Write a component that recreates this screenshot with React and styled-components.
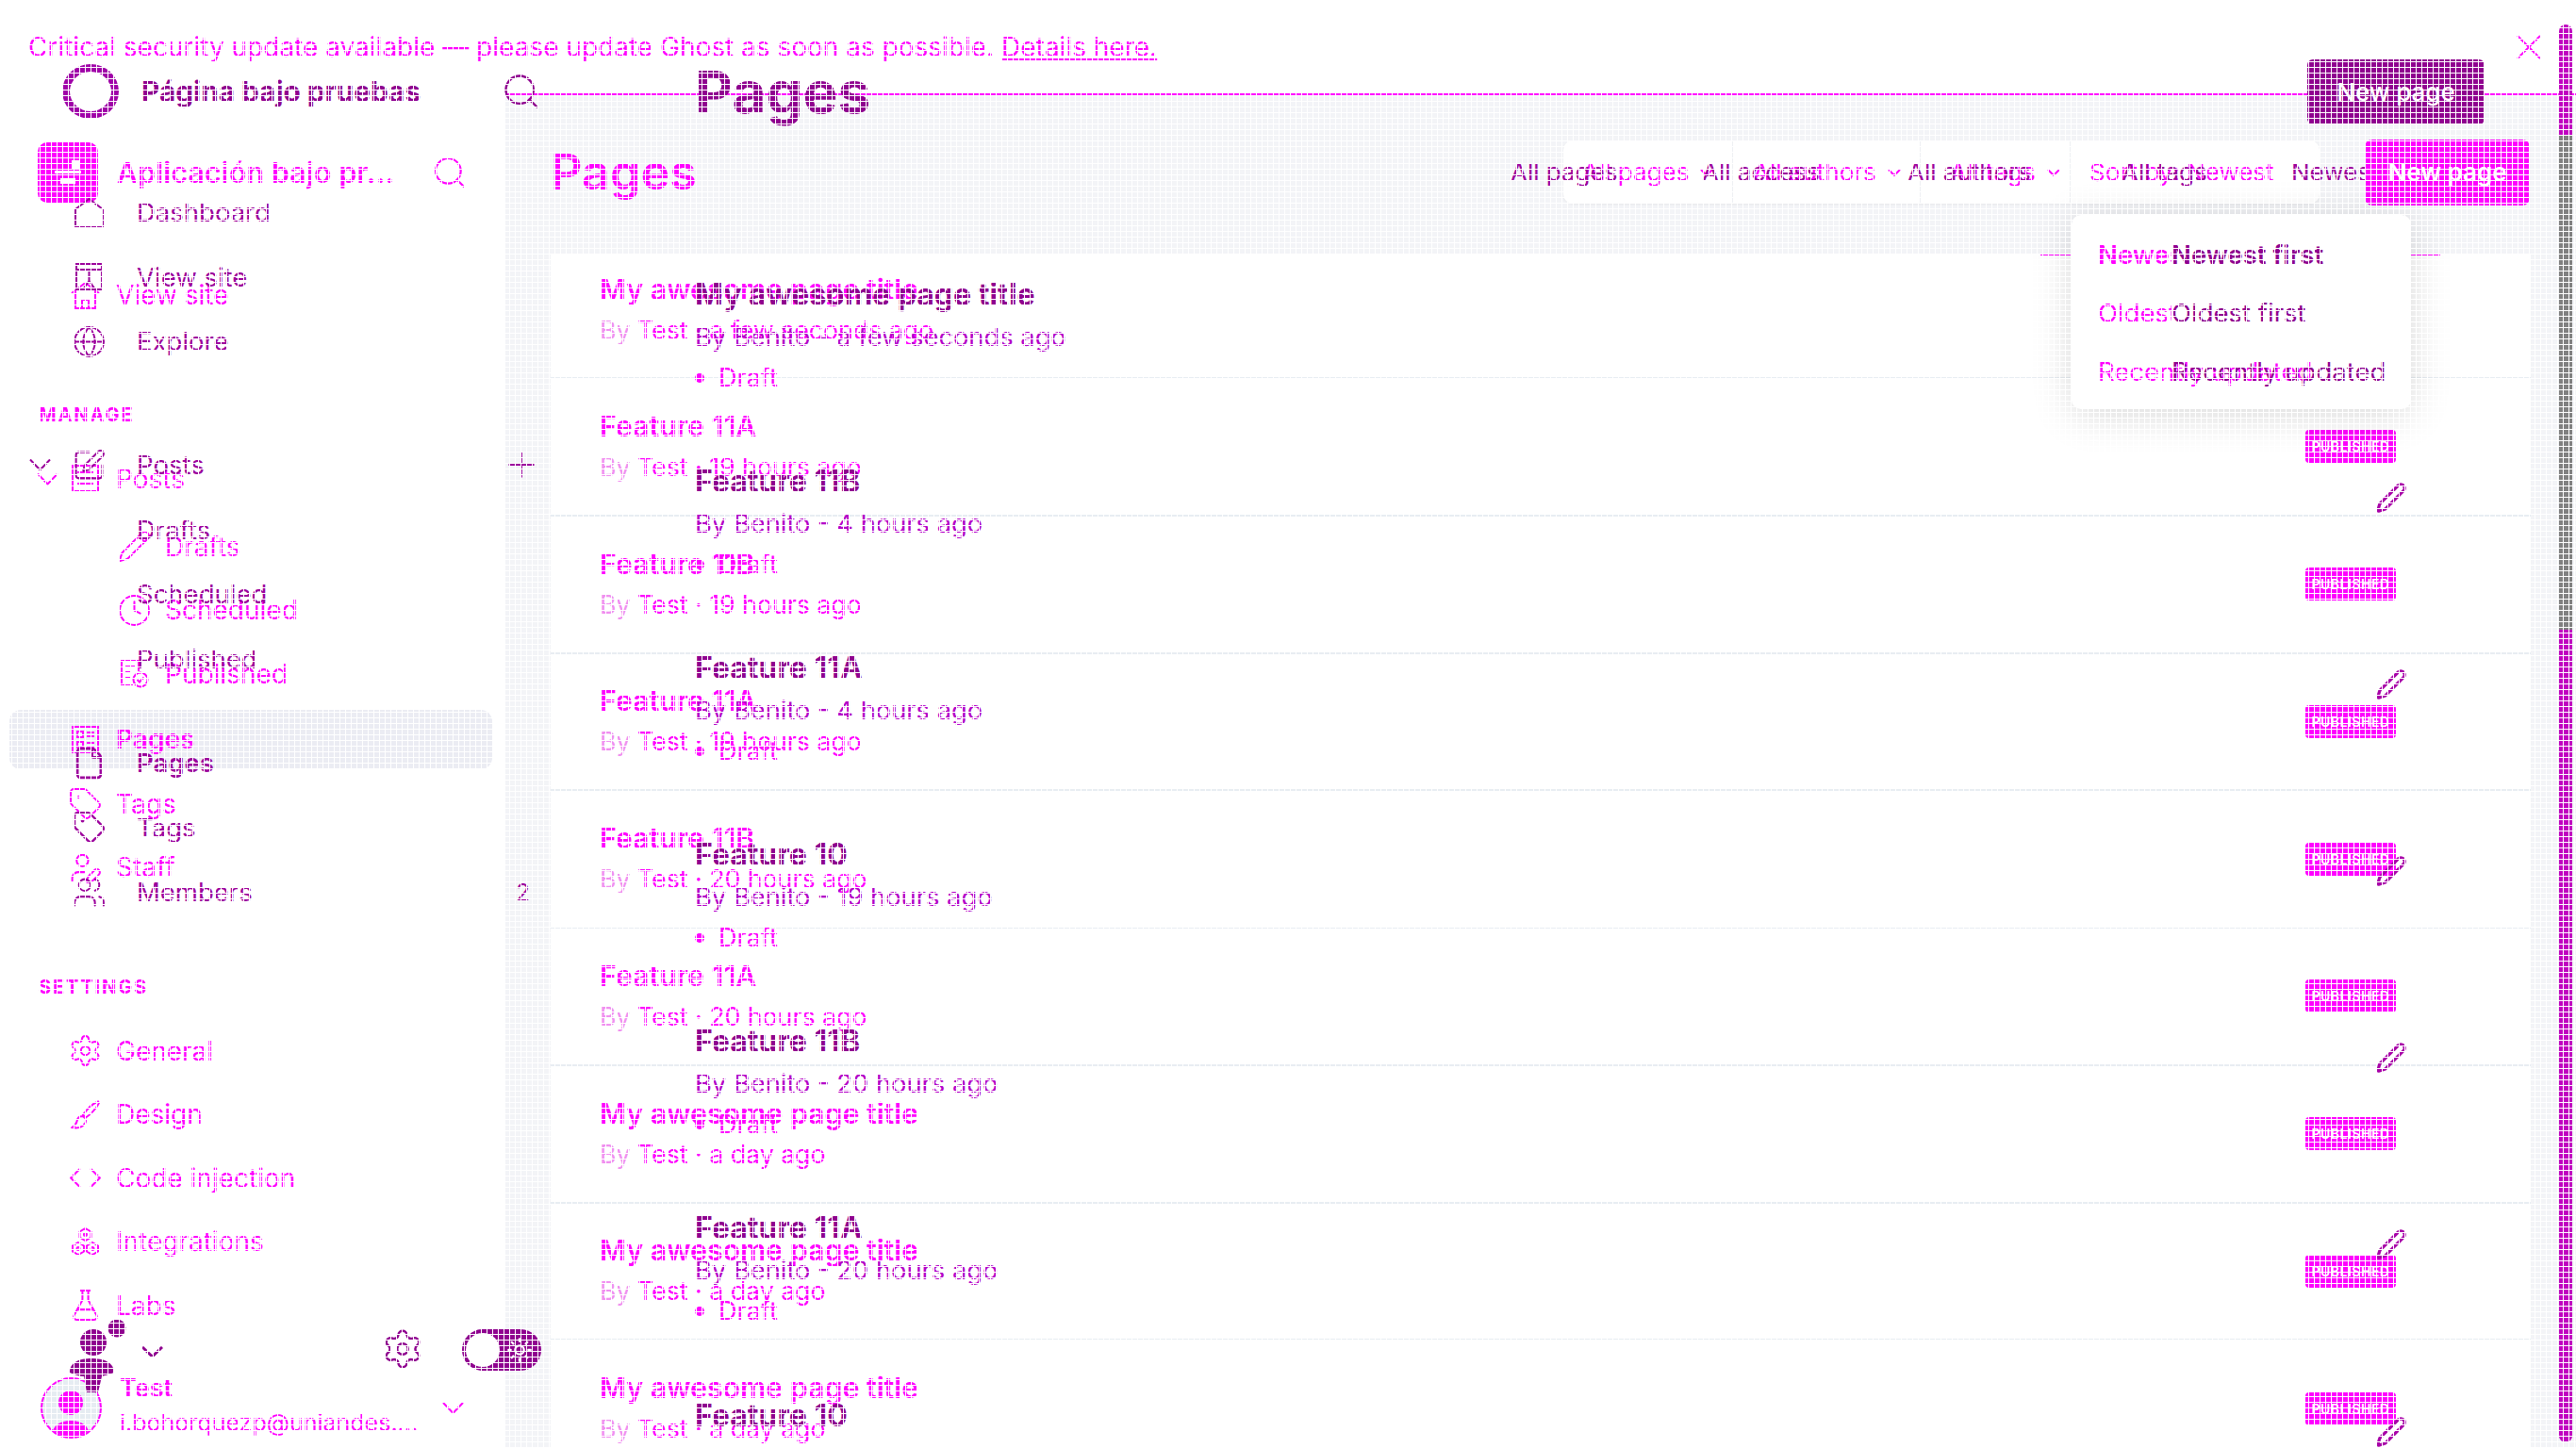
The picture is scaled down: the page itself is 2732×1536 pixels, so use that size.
import React from 'react';
import styled, { createGlobalStyle } from 'styled-components';
import {
  Clock, Code, File, FlaskConical, Globe, Pen, Pencil, Plus, Search, Settings,
  SquarePen, Sun, Tag, UserPen, Users,
} from 'lucide-react';

const MAGENTA = '#ff00ff';
const PURPLE = '#8f008f';

const GlobalStyle = createGlobalStyle`
  html, body {
    margin: 0;
    width: 2732px;
    height: 1536px;
    overflow: hidden;
    background: #fff;
  }
  * { box-sizing: border-box; }
`;

const Screen = styled.div`
  position: relative;
  width: 2732px;
  height: 1536px;
  overflow: hidden;
  background: #fff;
  font-family: Inter, "Liberation Sans", sans-serif;
`;

// the two captures lie over each other, so each one is its own layer
const CurrentLayer = styled.div`
  position: absolute;
  inset: 0;
  display: flex;
  flex-direction: column;
  color: ${MAGENTA};
`;

const BaseLayer = styled.div`
  position: absolute;
  inset: 0;
  display: flex;
  color: ${PURPLE};
`;

const Banner = styled.div`
  height: 99px;
  flex: none;
  display: flex;
  align-items: center;
  justify-content: space-between;
  padding: 0 37px 0 30px;
  font-size: 28px;
  a { color: inherit; text-decoration: underline; }
`;

const CurrentBody = styled.div`
  flex: 1;
  display: flex;
  min-height: 0;
`;

const CurrentSide = styled.div`
  width: 536px;
  flex: none;
  display: flex;
  flex-direction: column;
`;

const AppHead = styled.div`
  height: 66px;
  margin-top: 51px;
  display: flex;
  align-items: center;
  padding: 0 39px 0 40px;
`;

const AppIcon = styled.div`
  width: 64px;
  height: 64px;
  flex: none;
  border-radius: 10px;
  background: ${MAGENTA};
  display: flex;
  align-items: center;
  justify-content: center;
`;

const AppName = styled.div`
  flex: 1;
  margin-left: 20px;
  font-size: 30px;
  font-weight: 600;
  letter-spacing: 0.3px;
  white-space: nowrap;
`;

const SectionLabel = styled.div`
  height: 24px;
  margin: 81px 0 22.25px 41px;
  font-size: 20px;
  line-height: 24px;
  font-weight: 700;
  letter-spacing: 1.9px;
`;

const NavRow = styled.div`
  height: 67.5px;
  display: flex;
  align-items: center;
  gap: 17px;
  padding-left: ${p => (p.$sub ? 127 : 75)}px;
  margin-top: ${p => p.$top || 0}px;
  font-size: 28px;
  position: relative;
  > svg.lucide { width: 37px; height: 37px; margin: -3px; flex: none; }
  > svg { flex: none; }
`;

const ActiveRow = styled(NavRow)`
  width: 512px;
  height: 63px;
  margin: 4.25px 0 3px 10px;
  padding-left: 65px;
  border-radius: 12px;
  background: #ebecf3;
  font-weight: 600;
`;

const RowChevron = styled.span`
  position: absolute;
  left: ${p => p.$left}px;
  top: 50%;
  transform: translateY(-50%);
  display: flex;
`;

const UserRow = styled.div`
  margin-top: 41px;
  padding: 0 44px 0 43px;
  display: flex;
  align-items: center;
  gap: 19px;
`;

const Avatar = styled.div`
  width: 65px;
  height: 65px;
  flex: none;
  border-radius: 50%;
  border: 2px solid ${MAGENTA};
  background: #e6ecf2;
  overflow: hidden;
`;

const UserText = styled.div`
  flex: 1;
  margin-top: -6px;
  font-size: 25px;
  line-height: 37px;
  white-space: nowrap;
  strong { display: block; font-size: 27px; font-weight: 600; }
`;

const CurrentMain = styled.div`
  flex: 1;
  display: flex;
  flex-direction: column;
  min-width: 0;
  padding-left: 48px;
  background: #f3f4f7;
  border-top: 2px solid ${MAGENTA};
`;

const CurrentHead = styled.div`
  height: 168px;
  flex: none;
  display: flex;
  align-items: center;
  padding: 0 49px 5px 0;
`;

const CurrentTitle = styled.div`
  flex: 1;
  font-size: 52px;
  font-weight: 600;
`;

const FilterBox = styled.div`
  height: 67px;
  display: flex;
  margin-right: 48px;
  border-radius: 10px;
  background: #fff;
  box-shadow: 0 1px 3px rgba(0, 0, 0, 0.05);
`;

const FilterCell = styled.div`
  width: ${p => p.$w}px;
  display: flex;
  align-items: center;
  gap: 12px;
  padding-left: ${p => p.$pad}px;
  font-size: 26px;
  white-space: nowrap;
  & + & { border-left: 1px solid #eef0f3; }
`;

const NewButton = styled.div`
  width: 175px;
  height: 70px;
  display: flex;
  align-items: center;
  justify-content: center;
  border-radius: 8px;
  background: ${MAGENTA};
  color: #fff;
  font-size: 26px;
  font-weight: 600;
`;

const Card = styled.div`
  flex: 1;
  position: relative;
  margin-right: 48px;
  background: #fff;
  border-top: 1px solid #e6e9ee;
`;

const CardEdge = styled.div`
  position: absolute;
  left: 1580px;
  top: -1px;
  width: 424px;
  height: 2px;
  background: ${MAGENTA};
`;

const RowText = styled.div`
  margin-top: -4px;
`;

const CurrentRow = styled.div`
  height: 145.75px;
  display: flex;
  align-items: center;
  justify-content: space-between;
  padding: 0 143px 0 52px;
  border-bottom: 2px solid #e8edf2;
  &:first-child {
    height: 132px;
    ${RowText} { margin-top: -16px; }
  }
`;

const RowTitle = styled.div`
  font-size: 30.300px;
  line-height: 36px;
  font-weight: 600;
  white-space: nowrap;
`;

const RowMeta = styled.div`
  margin-top: 10px;
  font-size: 26.700px;
  line-height: 30px;
  white-space: nowrap;
  span { color: #f090f0; }
`;

const Badge = styled.div`
  width: 96px;
  height: 35px;
  display: flex;
  align-items: center;
  justify-content: center;
  border-radius: 4px;
  background: ${MAGENTA};
  color: #fff;
  font-size: 14px;
  font-weight: 600;
  letter-spacing: 0.5px;
`;

const BaseSide = styled.div`
  width: 600px;
  height: 1536px;
  flex: none;
  display: flex;
  flex-direction: column;
  padding-top: 68px;
`;

const SiteHead = styled.div`
  height: 58px;
  flex: none;
  display: flex;
  align-items: center;
  padding: 0 25px 0 66px;
`;

const LogoRing = styled.div`
  width: 60px;
  height: 58px;
  flex: none;
  border-radius: 50%;
  border: 8px solid #a000a8;
`;

const SiteName = styled.div`
  flex: 1;
  margin-left: 24px;
  font-size: 29.800px;
  font-weight: 700;
  white-space: nowrap;
`;

const BaseRow = styled.div`
  height: 68.5px;
  flex: none;
  display: flex;
  align-items: center;
  gap: 35px;
  margin-top: ${p => p.$top || 0}px;
  padding: 0 25px 0 ${p => (p.$sub ? 145 : 79)}px;
  font-size: 27.500px;
  font-weight: ${p => (p.$active ? 600 : 400)};
  position: relative;
  color: #9c009c;
  > svg.lucide { width: 37px; height: 37px; margin: -3px; flex: none; }
  > svg { flex: none; }
`;

const RowEnd = styled.span`
  margin-left: auto;
  display: flex;
  font-size: 24px;
`;

const RowCount = styled(RowEnd)`
  margin-right: 13px;
`;

const BaseFooter = styled.div`
  margin-top: auto;
  height: 77px;
  flex: none;
  margin-bottom: 59px;
  padding-left: 74px;
  display: flex;
  align-items: flex-start;
`;

const FooterChevron = styled.span`
  display: flex;
  margin: 28px 0 0 16px;
`;

const FooterGear = styled.span`
  display: flex;
  margin: 8px 0 0 231px;
`;

const Toggle = styled.div`
  position: relative;
  width: 84px;
  height: 44px;
  margin: 10px 0 0 40px;
  border-radius: 22px;
  background: ${PURPLE};
  display: flex;
  align-items: center;
  justify-content: flex-end;
  padding-right: 9px;
`;

const ToggleKnob = styled.span`
  position: absolute;
  left: 4px;
  top: 4px;
  width: 36px;
  height: 36px;
  border-radius: 50%;
  background: #fff;
`;

const BaseMain = styled.div`
  flex: 1;
  min-width: 0;
  margin-left: 137px;
  padding: 63px 97px 0 0;
  display: flex;
  flex-direction: column;
`;

const BaseHead = styled.div`
  height: 69px;
  flex: none;
  display: flex;
  align-items: center;
  justify-content: space-between;
`;

const BaseTitle = styled.div`
  font-size: 62px;
  font-weight: 700;
`;

const BaseButton = styled.div`
  width: 188px;
  height: 69px;
  display: flex;
  align-items: center;
  justify-content: center;
  border-radius: 6px;
  background: ${PURPLE};
  color: #fff;
  font-size: 26px;
  font-weight: 500;
`;

const BaseFilters = styled.div`
  height: 40px;
  flex: none;
  margin: 31px 127px 90px 0;
  display: flex;
  justify-content: flex-end;
  font-size: 26px;
  line-height: 40px;
  white-space: nowrap;
  color: #9c009c;
`;

const BaseFilter = styled.div`
  width: ${p => p.$w}px;
  overflow: hidden;
`;

const BaseItem = styled.div`
  height: 198.100px;
  flex: none;
  display: flex;
  align-items: flex-start;
  justify-content: space-between;
  padding-right: 82px;
`;

const BaseItemTitle = styled.div`
  font-size: 32px;
  line-height: 40px;
  font-weight: 700;
  white-space: nowrap;
`;

const BaseItemMeta = styled.div`
  margin-top: 10px;
  font-size: 27.300px;
  line-height: 30px;
  white-space: nowrap;
  color: #b400c8;
`;

const DraftTag = styled.div`
  margin-top: 13px;
  display: flex;
  align-items: center;
  gap: 15px;
  font-size: 27px;
  line-height: 30px;
  color: ${MAGENTA};
  &::before {
    content: '';
    width: 10px;
    height: 10px;
    border-radius: 50%;
    background: ${MAGENTA};
  }
`;

const EditIcon = styled.span`
  display: flex;
  margin-top: 20px;
  color: #a800a8;
`;

const Dropdown = styled.div`
  position: absolute;
  left: 2197px;
  top: 228px;
  width: 360px;
  height: 206px;
  padding-top: 11px;
  border-radius: 10px;
  background: #fff;
  box-shadow: 0 6px 44px rgba(0, 0, 0, 0.16);
`;

const DropItem = styled.div`
  height: 62px;
  display: grid;
  align-items: center;
  padding-left: 28px;
  font-size: 27.500px;
  white-space: nowrap;
  font-weight: ${p => (p.$bold ? 600 : 400)};
  > * { grid-area: 1 / 1; }
`;

const DropCurrent = styled.span`
  color: ${MAGENTA};
  overflow: hidden;
  ${p => p.$clip && 'width: 78px;'}
`;

const DropBase = styled.span`
  margin-left: 78px;
  color: ${PURPLE};
`;

const Scrollbar = styled.div`
  position: absolute;
  left: 2714px;
  top: 26px;
  width: 14px;
  height: 1504px;
  border-radius: 7px;
  overflow: hidden;
  display: flex;
  flex-direction: column;
`;

const ScrollPart = styled.div`
  height: ${p => p.$h}px;
  background: ${p => p.$color};
`;

// fine white mesh that runs across the whole capture
const Mesh = styled.div`
  position: absolute;
  inset: 0;
  pointer-events: none;
  background-image:
    repeating-linear-gradient(90deg, #fff 0 1px, transparent 1px 6px),
    repeating-linear-gradient(0deg, #fff 0 1px, transparent 1px 6px);
  background-position: 0 0;
`;

const Chevron = ({ w = 23, h = 13, sw = 2 }) => (
  <svg width={w} height={h} viewBox={`0 0 ${w} ${h}`} fill="none" stroke="currentColor" strokeWidth={sw}>
    <path d={`M1 1 ${w / 2} ${h - 1} ${w - 1} 1`} />
  </svg>
);

const CloseIcon = () => (
  <svg width="26" height="26" viewBox="0 0 26 26" fill="none" stroke="currentColor" strokeWidth="2">
    <path d="m1 1 24 24M25 1 1 25" />
  </svg>
);

const HomeIcon = () => (
  <svg width="31" height="31" viewBox="0 0 31 31" fill="none" stroke="currentColor" strokeWidth="2">
    <path d="M1 30V12L15.500 1 30 12v18z" />
  </svg>
);

const HouseIcon = () => (
  <svg width="31" height="31" viewBox="0 0 31 31" fill="none" stroke="currentColor" strokeWidth="2">
    <path d="M1 13 15.500 2 30 13M5 11v18h21V11M12 29v-9h7v9" />
  </svg>
);

const WindowIcon = () => (
  <svg width="31" height="31" viewBox="0 0 31 31" fill="none" stroke="currentColor" strokeWidth="2">
    <path d="M2 2h27v27H2zM2 8h27M15.500 8v12M9 29l6.500-9 6.500 9" />
  </svg>
);

const ListDocIcon = () => (
  <svg width="31" height="31" viewBox="0 0 31 31" fill="none" stroke="currentColor" strokeWidth="2">
    <path d="M2 2h27v27H2zM7 9h17M7 15h17M7 21h17" />
  </svg>
);

const PagesIcon = () => (
  <svg width="31" height="31" viewBox="0 0 31 31" fill="none" stroke="currentColor" strokeWidth="2">
    <path d="M2 2h27v27H2zM7 7h6v6H7zM7 18h6v6H7zM17 8h8M17 12h8M17 19h8M17 23h8" />
  </svg>
);

const PublishedIcon = () => (
  <svg width="31" height="31" viewBox="0 0 31 31" fill="none" stroke="currentColor" strokeWidth="2">
    <path d="M14 27H2V2h18v11M6 8h10M6 14h6M6 20h5" />
    <circle cx="22" cy="22" r="7.500" />
    <path d="m18.500 22 2.500 2.500 4.500-5" />
  </svg>
);

const BrushIcon = () => (
  <svg width="31" height="31" viewBox="0 0 31 31" fill="none" stroke="currentColor" strokeWidth="2">
    <path d="M29 1.500c-5 2-12 8.500-16 14l3 3c5-3.500 12-10.500 14-15.500zM12.500 17c-4 0-5.500 2.500-6 5.500-.5 2.500-2 4.500-5 6.500 5 1 11 0 14-5 1-2 .5-5-3-7z" />
  </svg>
);

const IntegrationsIcon = () => (
  <svg width="31" height="31" viewBox="0 0 31 31" fill="none" stroke="currentColor" strokeWidth="2">
    <path d="m15.500 1 6 3.500v6l-6 3.500-6-3.500v-6zM8 16l6 3.500v6L8 29l-6-3.500v-6zM23 16l6 3.500v6L23 29l-6-3.500v-6z" />
    <circle cx="15.500" cy="7.500" r="1.500" />
    <circle cx="8" cy="22.500" r="1.500" />
    <circle cx="23" cy="22.500" r="1.500" />
  </svg>
);

const PeopleIcon = () => (
  <svg width="60" height="77" viewBox="0 0 60 77" fill={PURPLE}>
    <circle cx="25" cy="24" r="14" />
    <circle cx="50" cy="9" r="9.500" />
    <path d="M0 56c0-11 10-15 23-15s24 4 24 15c-5 2-10 3-13 4l-4 17H18l-3-17C10 60 4 58 0 56z" />
  </svg>
);

const AvatarFigure = () => (
  <svg width="61" height="61" viewBox="0 0 61 61" fill={MAGENTA}>
    <circle cx="30" cy="25" r="13" />
    <path d="M10 61c0-12 9-17 20-17s20 5 20 17z" />
  </svg>
);

const AppGlyph = () => (
  <svg width="36" height="30" viewBox="0 0 36 30" fill="#fff">
    <path d="M22 2h9v9h-9zM4 13h28v3H4zM10 21h16v6H10z" />
  </svg>
);

const currentNav = [
  { label: 'Drafts', icon: <Pencil strokeWidth={1.3} />, top: 4.5 },
  { label: 'Scheduled', icon: <Clock strokeWidth={1.3} /> },
  { label: 'Published', icon: <PublishedIcon /> },
];

const currentSettings = [
  { label: 'General', icon: <Settings strokeWidth={1.3} /> },
  { label: 'Design', icon: <BrushIcon /> },
  { label: 'Code injection', icon: <Code strokeWidth={1.3} /> },
  { label: 'Integrations', icon: <IntegrationsIcon /> },
  { label: 'Labs', icon: <FlaskConical strokeWidth={1.3} /> },
];

const currentRows = [
  ['My awesome page title', 'a few seconds ago'],
  ['Feature 11A', '19 hours ago'],
  ['Feature 11B', '19 hours ago'],
  ['Feature 11A', '19 hours ago'],
  ['Feature 11B', '20 hours ago'],
  ['Feature 11A', '20 hours ago'],
  ['My awesome page title', 'a day ago'],
  ['My awesome page title', 'a day ago'],
  ['My awesome page title', 'a day ago'],
];

const baseRows = [
  ['My awesome page title', 'a few seconds ago'],
  ['Feature 11B', '4 hours ago'],
  ['Feature 11A', '4 hours ago'],
  ['Feature 10', '19 hours ago'],
  ['Feature 11B', '20 hours ago'],
  ['Feature 11A', '20 hours ago'],
  ['Feature 10', '20 hours ago'],
];

const baseFilters = [
  ['All pages', 203],
  ['All access', 218],
  ['All authors', 227],
  ['All tags', 180],
  ['Newest first', 78],
];

function Current() {
  return (
    <CurrentLayer>
      <Banner>
        <div>
          Critical security update available — please update Ghost as soon as possible. <a href="#details">Details here.</a>
        </div>
        <CloseIcon />
      </Banner>
      <CurrentBody>
        <CurrentSide>
          <AppHead>
            <AppIcon><AppGlyph /></AppIcon>
            <AppName>Aplicación bajo pr...</AppName>
            <Search size={40} strokeWidth={1.3} />
          </AppHead>
          <NavRow $top={63.25}><HouseIcon />View site</NavRow>
          <SectionLabel>MANAGE</SectionLabel>
          <NavRow>
            <RowChevron $left={39}><Chevron /></RowChevron>
            <ListDocIcon />Posts
          </NavRow>
          {currentNav.map(item => (
            <NavRow key={item.label} $sub $top={item.top}>{item.icon}{item.label}</NavRow>
          ))}
          <ActiveRow><PagesIcon />Pages</ActiveRow>
          <NavRow><Tag strokeWidth={1.3} />Tags</NavRow>
          <NavRow><UserPen strokeWidth={1.3} />Staff</NavRow>
          <SectionLabel>SETTINGS</SectionLabel>
          {currentSettings.map(item => (
            <NavRow key={item.label}>{item.icon}{item.label}</NavRow>
          ))}
          <UserRow>
            <Avatar><AvatarFigure /></Avatar>
            <UserText>
              <strong>Test</strong>
              i.bohorquezp@uniandes....
            </UserText>
            <Chevron />
          </UserRow>
        </CurrentSide>
        <CurrentMain>
          <CurrentHead>
            <CurrentTitle>Pages</CurrentTitle>
            <FilterBox>
              <FilterCell $w={179} $pad={20}>All pages<Chevron w={14} h={8} /></FilterCell>
              <FilterCell $w={199} $pad={21}>All authors<Chevron w={14} h={8} /></FilterCell>
              <FilterCell $w={159} $pad={31}>All tags<Chevron w={14} h={8} /></FilterCell>
              <FilterCell $w={265} $pad={20}>Sort by: Newest</FilterCell>
            </FilterBox>
            <NewButton>New page</NewButton>
          </CurrentHead>
          <Card>
            {currentRows.map(([title, age], i) => (
              <CurrentRow key={i}>
                <RowText>
                  <RowTitle>{title}</RowTitle>
                  <RowMeta><span>By</span> Test · {age}</RowMeta>
                </RowText>
                <Badge>PUBLISHED</Badge>
              </CurrentRow>
            ))}
            <CardEdge />
          </Card>
        </CurrentMain>
      </CurrentBody>
    </CurrentLayer>
  );
}

function Base() {
  return (
    <BaseLayer>
      <BaseSide>
        <SiteHead>
          <LogoRing />
          <SiteName>Página bajo pruebas</SiteName>
          <Search size={44} strokeWidth={1.3} />
        </SiteHead>
        <BaseRow $top={64.75}><HomeIcon />Dashboard</BaseRow>
        <BaseRow><WindowIcon />View site</BaseRow>
        <BaseRow><Globe strokeWidth={1.3} />Explore</BaseRow>
        <BaseRow $top={62.75}>
          <RowChevron $left={31}><Chevron /></RowChevron>
          <SquarePen strokeWidth={1.3} />Posts
          <RowEnd><Plus size={44} strokeWidth={1} /></RowEnd>
        </BaseRow>
        <BaseRow $sub>Drafts</BaseRow>
        <BaseRow $sub>Scheduled</BaseRow>
        <BaseRow $sub>Published</BaseRow>
        <BaseRow $top={42} $active><File strokeWidth={1.7} />Pages</BaseRow>
        <BaseRow><Tag strokeWidth={1.5} />Tags</BaseRow>
        <BaseRow><Users strokeWidth={1.3} />Members<RowCount>2</RowCount></BaseRow>
        <BaseFooter>
          <PeopleIcon />
          <FooterChevron><Chevron h={12} sw={3} /></FooterChevron>
          <FooterGear><Settings size={46} strokeWidth={1.3} /></FooterGear>
          <Toggle>
            <ToggleKnob />
            <Sun size={28} color="#fff" strokeWidth={2} />
          </Toggle>
        </BaseFooter>
      </BaseSide>
      <BaseMain>
        <BaseHead>
          <BaseTitle>Pages</BaseTitle>
          <BaseButton>New page</BaseButton>
        </BaseHead>
        <BaseFilters>
          {baseFilters.map(([label, w]) => (
            <BaseFilter key={label} $w={w}>{label}</BaseFilter>
          ))}
        </BaseFilters>
        {baseRows.map(([title, age], i) => (
          <BaseItem key={i}>
            <div>
              <BaseItemTitle>{title}</BaseItemTitle>
              <BaseItemMeta>By Benito - {age}</BaseItemMeta>
              <DraftTag>Draft</DraftTag>
            </div>
            <EditIcon><Pen size={34} strokeWidth={2.3} /></EditIcon>
          </BaseItem>
        ))}
      </BaseMain>
    </BaseLayer>
  );
}

export default function App() {
  return (
    <Screen>
      <GlobalStyle />
      <Current />
      <Base />
      <Dropdown>
        <DropItem $bold>
          <DropCurrent $clip>Newest first</DropCurrent>
          <DropBase>Newest first</DropBase>
        </DropItem>
        <DropItem>
          <DropCurrent $clip>Oldest first</DropCurrent>
          <DropBase>Oldest first</DropBase>
        </DropItem>
        <DropItem>
          <DropCurrent>Recently updated</DropCurrent>
          <DropBase>Recently updated</DropBase>
        </DropItem>
      </Dropdown>
      <Scrollbar>
        <ScrollPart $h={118} $color="#c000c0" />
        <ScrollPart $h={524} $color="#808080" />
        <ScrollPart $h={862} $color="#c000c0" />
      </Scrollbar>
      <Mesh />
    </Screen>
  );
}
